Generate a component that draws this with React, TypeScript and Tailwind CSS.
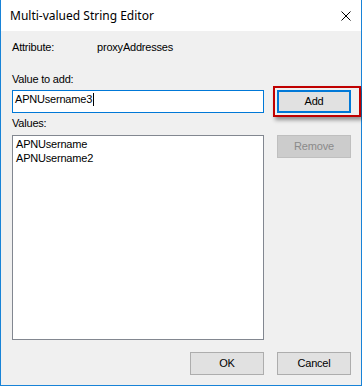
import React from "react";

const body = { fontFamily: '"Liberation Sans", Arial, sans-serif' };
const title = { fontFamily: '"Noto Sans", "Open Sans", sans-serif' };

export default function App() {
  return (
    <div
      className="relative w-[362px] h-[386px] bg-[#f0f0f0] border-x border-b border-[#1883d7] flex flex-col text-black"
      style={body}
    >
      <div className="h-[31px] bg-white flex items-center justify-between pl-[9px] pr-[10px]">
        <span className="text-[12px] leading-[16px] text-black" style={title}>
          Multi-valued String Editor
        </span>
        <svg width="10" height="10" viewBox="0 0 10 10" className="block">
          <path d="M0.5 0.5 L9.5 9.5 M9.5 0.5 L0.5 9.5" stroke="#000" strokeWidth="1" fill="none" />
        </svg>
      </div>

      <div className="flex-1 flex flex-col pl-[11px] pr-[10px] text-[11px] leading-[13px] tracking-[-0.2px]">
        <div className="mt-[10px] flex">
          <span className="w-[85px]">Attribute:</span>
          <span>proxyAddresses</span>
        </div>

        <div className="mt-[19px]">Value to add:</div>

        <div className="mt-[4px] flex justify-between">
          <div className="w-[252px] h-[23px] bg-white border border-[#0078d7] pl-[2px] pt-[2px] flex items-start">
            <span>APNUsername3</span>
            <span className="ml-[1px] w-[1px] h-[13px] bg-black" />
          </div>
          <button className="w-[74px] h-[23px] bg-[#e1e1e1] border-2 border-[#0078d7] flex items-center justify-center text-black font-normal">
            Add
          </button>
        </div>

        <div className="mt-[4px] flex justify-between items-start">
          <div className="flex flex-col">
            <div>Values:</div>
            <div className="mt-[5px] w-[252px] h-[205px] bg-white border border-[#828790] pl-[3px] pt-[1px] leading-[14px]">
              <div>APNUsername</div>
              <div>APNUsername2</div>
            </div>
          </div>
          <button className="mt-[18px] w-[74px] h-[23px] bg-[#cccccc] border border-[#bfbfbf] flex items-center justify-center text-[#8a8a8a]">
            Remove
          </button>
        </div>

        <div className="mt-[12px] flex justify-end gap-[13px]">
          <button className="w-[74px] h-[23px] bg-[#e1e1e1] border border-[#adadad] flex items-center justify-center text-black">
            OK
          </button>
          <button className="w-[74px] h-[23px] bg-[#e1e1e1] border border-[#adadad] flex items-center justify-center text-black">
            Cancel
          </button>
        </div>
      </div>

      <div className="absolute left-[272px] top-[86px] w-[88px] h-[31px] border-2 border-[#c00000] shadow-[2px_3px_4px_rgba(0,0,0,0.4)] pointer-events-none" />
    </div>
  );
}
